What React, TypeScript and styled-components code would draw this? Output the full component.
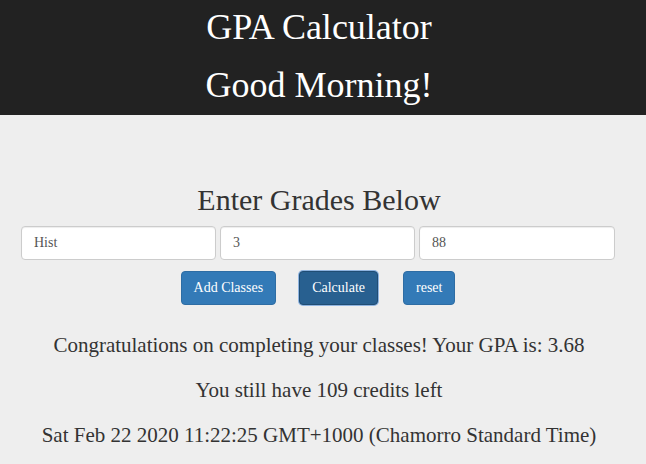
import React from "react";
import styled, { createGlobalStyle } from "styled-components";

const Global = createGlobalStyle`
  html, body { margin: 0; padding: 0; background: #eeeeee; }
  body { font-family: "Liberation Serif", "Times New Roman", serif; color: #333; }
`;

const Page = styled.div`
  width: 646px;
  min-height: 464px;
  background: #eeeeee;
`;

const Header = styled.header`
  background: #222222;
  color: #ffffff;
  padding: 7px 0 10px;
  display: flex;
  flex-direction: column;
  align-items: center;
  gap: 18px;
`;

const Title = styled.h1`
  margin: 0;
  font-size: 36px;
  font-weight: 400;
  line-height: 40px;
  margin-left: -8px;
`;

const Main = styled.main`
  display: flex;
  flex-direction: column;
  align-items: center;
  padding-top: 68px;
`;

const SubTitle = styled.h2`
  margin: 0 0 10px -8px;
  font-size: 30px;
  font-weight: 400;
  line-height: 33px;
  color: #333;
`;

const InputRow = styled.div`
  align-self: stretch;
  display: flex;
  gap: 4px;
  padding-left: 21px;
`;

const Field = styled.input<{ $w?: number }>`
  box-sizing: border-box;
  width: ${(p) => p.$w ?? 195}px;
  height: 34px;
  padding: 6px 12px;
  border: 1px solid #ccc;
  border-radius: 4px;
  background: #fff;
  font-family: "Liberation Serif", "Times New Roman", serif;
  font-size: 14px;
  color: #555;
  box-shadow: inset 0 1px 1px rgba(0, 0, 0, 0.075);
  outline: none;
`;

const ButtonRow = styled.div`
  display: flex;
  margin-top: 11px;
  margin-left: -10px;
`;

const Button = styled.button<{ $active?: boolean; $ml?: number }>`
  box-sizing: border-box;
  height: 34px;
  margin-left: ${(p) => p.$ml ?? 0}px;
  padding: 6px 12px;
  border: 1px solid ${(p) => (p.$active ? "#204d74" : "#2e6da4")};
  border-radius: 4px;
  background: ${(p) => (p.$active ? "#286090" : "#337ab7")};
  color: #fff;
  font-family: "Liberation Serif", "Times New Roman", serif;
  font-size: 14px;
  line-height: 20px;
  box-shadow: ${(p) => (p.$active ? "0 0 0 1px #8fb4e0" : "none")};
  cursor: pointer;
`;

const Results = styled.div`
  display: flex;
  flex-direction: column;
  align-items: center;
  gap: 17px;
  margin-top: 26px;
`;

const Line = styled.p`
  margin: 0 0 0 -8px;
  font-size: 21px;
  line-height: 28px;
  color: #333;
  white-space: nowrap;
`;

export default function App() {
  return (
    <Page>
      <Global />
      <Header>
        <Title>GPA Calculator</Title>
        <Title>Good Morning!</Title>
      </Header>
      <Main>
        <SubTitle>Enter Grades Below</SubTitle>
        <InputRow>
          <Field defaultValue="Hist" />
          <Field defaultValue="3" />
          <Field defaultValue="88" $w={196} />
        </InputRow>
        <ButtonRow>
          <Button>Add Classes</Button>
          <Button $active $ml={23}>Calculate</Button>
          <Button $ml={25}>reset</Button>
        </ButtonRow>
        <Results>
          <Line>Congratulations on completing your classes! Your GPA is: 3.68</Line>
          <Line>You still have 109 credits left</Line>
          <Line>Sat Feb 22 2020 11:22:25 GMT+1000 (Chamorro Standard Time)</Line>
        </Results>
      </Main>
    </Page>
  );
}
